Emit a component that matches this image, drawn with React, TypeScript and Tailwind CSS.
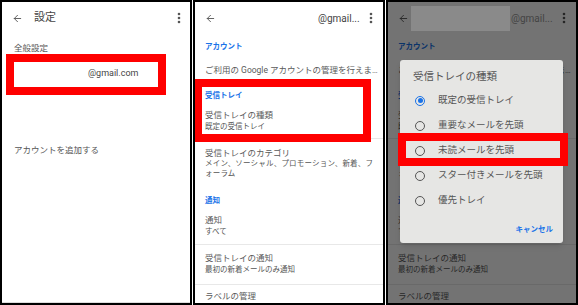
import { ArrowLeft } from "lucide-react";

const jp = "font-['Roboto','Noto_Sans_CJK_JP',sans-serif]";

function Kebab() {
  return (
    <svg width="4" height="12" viewBox="0 0 4 12" className="shrink-0">
      <circle cx="2" cy="2" r="1.3" fill="#555" />
      <circle cx="2" cy="6" r="1.3" fill="#555" />
      <circle cx="2" cy="10" r="1.3" fill="#555" />
    </svg>
  );
}

function RedBox({ className }: { className: string }) {
  return <div className={`absolute border-[8px] border-[#ff0000] pointer-events-none ${className}`} />;
}

function Section({ title, className }: { title: string; className: string }) {
  return (
    <div className={`flex items-center pl-[10px] text-[7.5px] font-bold text-[#1a73e8] ${className}`}>
      {title}
    </div>
  );
}

function AccountSettings({ masked }: { masked?: boolean }) {
  return (
    <div className="flex flex-col">
      <div className="flex h-[32px] items-center pl-[10px] pr-[10px]">
        <ArrowLeft size={11} strokeWidth={2} className="shrink-0 text-[#555]" />
        <div className={`ml-[2px] h-[25px] w-[99px] shrink-0 ${masked ? "bg-[#8a8a8a] relative z-20" : "bg-white"}`} />
        <span className={`ml-[1px] text-[10px] text-[#444] ${masked ? "relative z-20" : ""}`}>@gmail...</span>
        <div className="ml-auto">
          <Kebab />
        </div>
      </div>
      <Section title="アカウント" className="h-[26px]" />
      <div className="h-[20px] flex items-center pl-[10px] pr-[4px] text-[8.5px] text-[#5a5a5a] whitespace-nowrap overflow-hidden">
        <span className="truncate">ご利用の Google アカウントの管理を行えます</span>
      </div>
      <Section title="受信トレイ" className="h-[24px] mt-[4px]" />
      <div className="h-[31px] pt-[2px] pl-[10px] border-b border-[#e8e8e8]">
        <div className="text-[8.5px] leading-[11px] text-[#5a5a5a]">受信トレイの種類</div>
        <div className="text-[7.5px] leading-[11px] text-[#555]">既定の受信トレイ</div>
      </div>
      <div className="h-[49px] pt-[9px] pl-[10px] pr-[6px]">
        <div className="text-[8.5px] leading-[11px] text-[#5a5a5a]">受信トレイのカテゴリ</div>
        <div className="text-[7.5px] leading-[9.5px] text-[#555] tracking-[0.2px]">
          メイン、ソーシャル、プロモーション、新着、フォーラム
        </div>
      </div>
      <Section title="通知" className="h-[26px]" />
      <div className="h-[31px] pt-[1px] pl-[10px] border-b border-[#e8e8e8]">
        <div className="text-[8.5px] leading-[11px] text-[#5a5a5a]">通知</div>
        <div className="text-[7.5px] leading-[11px] text-[#555]">すべて</div>
      </div>
      <div className="h-[40px] pt-[8px] pl-[10px] border-b border-[#e8e8e8]">
        <div className="text-[8.5px] leading-[11px] text-[#5a5a5a]">受信トレイの通知</div>
        <div className="text-[7.5px] leading-[11px] text-[#555]">最初の新着メールのみ通知</div>
      </div>
      <div className="pt-[6px] pl-[10px] text-[8.5px] leading-[11px] text-[#5a5a5a]">ラベルの管理</div>
    </div>
  );
}

function Radio({ checked }: { checked?: boolean }) {
  return checked ? (
    <span className="flex h-[10px] w-[10px] items-center justify-center rounded-full border-[1.5px] border-[#1a73e8]">
      <span className="h-[5px] w-[5px] rounded-full bg-[#1a73e8]" />
    </span>
  ) : (
    <span className="h-[10px] w-[10px] rounded-full border-[1.5px] border-[#555]" />
  );
}

const options = ["既定の受信トレイ", "重要なメールを先頭", "未読メールを先頭", "スター付きメールを先頭", "優先トレイ"];

export default function App() {
  return (
    <div className={`flex h-[305px] w-[578px] gap-[1px] bg-white ${jp}`}>
      {/* panel 1 */}
      <div className="relative h-full w-[192px] overflow-hidden border-2 border-black bg-white">
        <div className="flex h-[32px] items-center pl-[10px] pr-[9px]">
          <ArrowLeft size={11} strokeWidth={2} className="text-[#555]" />
          <span className="ml-[11px] text-[11px] text-[#444]">設定</span>
          <div className="ml-auto">
            <Kebab />
          </div>
        </div>
        <div className="flex h-[28px] items-center pl-[12px] text-[8.5px] text-[#555]">全般設定</div>
        <div className="flex h-[24px] items-center pl-[86px] text-[9px] text-[#444]">@gmail.com</div>
        <div className="mt-[52px] flex h-[24px] items-center pl-[12px] text-[8.5px] text-[#555]">
          アカウントを追加する
        </div>
        <div className="absolute bottom-0 left-0 right-0 h-[1px] bg-[#dcdcdc]" />
        <RedBox className="left-[4px] top-[52px] h-[41px] w-[160px]" />
      </div>

      {/* panel 2 */}
      <div className="relative h-full w-[192px] overflow-hidden border-2 border-black bg-white">
        <AccountSettings />
        <RedBox className="left-[-1px] top-[77px] h-[63px] w-[177px]" />
      </div>

      {/* panel 3 */}
      <div className="relative h-full w-[192px] overflow-hidden border-2 border-black bg-white">
        <AccountSettings masked />
        <div className="absolute inset-0 z-10 bg-black/55" />
        <div className="absolute left-[12px] top-[58px] z-30 h-[183px] w-[163px] rounded-[3px] bg-[#e6e6e4] shadow-md">
          <div className="h-[28px] pt-[11px] pl-[13px] text-[10.5px] leading-[12px] text-[#555]">受信トレイの種類</div>
          {options.map((o, i) => (
            <div key={o} className="flex h-[25px] items-center pl-[15px]">
              <Radio checked={i === 0} />
              <span className="ml-[13px] text-[9.5px] text-[#555]">{o}</span>
            </div>
          ))}
          <div className="flex h-[22px] items-end justify-end pr-[10px] text-[7.5px] font-bold text-[#1a73e8]">
            キャンセル
          </div>
        </div>
        <RedBox className="z-40 left-[10px] top-[131px] h-[33px] w-[170px]" />
      </div>
    </div>
  );
}
